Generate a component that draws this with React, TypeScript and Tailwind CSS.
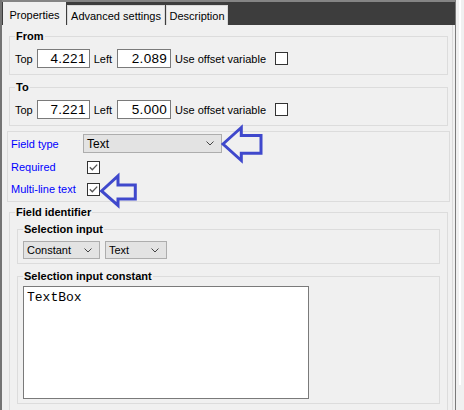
import type { ReactNode } from "react";

const SANS = "font-['Liberation_Sans',Arial,sans-serif]";

export default function App() {
  return (
    <div className={`relative flex h-[410px] w-[464px] overflow-hidden bg-[#f0f0f0] text-[11px] leading-[14px] text-black ${SANS}`}>
      <div className="w-[2px] bg-[#747474]" />
      <div className="flex w-[453px] flex-col">
        <TabBar />
        <div className="flex flex-1">
          <div className="flex-1 pl-[7px] pr-[4px] pt-[4px]">
            <OffsetGroup label="From" top="4.221" left="2.089" />
            <div className="mt-[5px]">
              <OffsetGroup label="To" top="7.221" left="5.000" />
            </div>
            <div className="-mx-[2px] mt-[5px] border border-[#dcdcdc] pb-px pl-[3px] pt-[2px]">
              <div className="flex h-[19px] items-center">
                <span className="w-[72px] text-[#0000ff]">Field type</span>
                <Dropdown width="w-[139px]" height="h-[19px]" text="Text" big />
              </div>
              <div className="mt-[3px] flex h-[22px] items-center">
                <span className="w-[72px] text-[#0000ff]">Required</span>
                <Checkbox checked className="ml-[4px]" />
              </div>
              <div className="flex h-[22px] items-center">
                <span className="w-[72px] text-[#0000ff]">Multi-line text</span>
                <Checkbox checked className="ml-[4px]" />
              </div>
            </div>
            <fieldset className="mt-[3px] border border-[#dcdcdc] px-[5px] pb-[8px]">
              <legend className="px-px font-bold">Field identifier</legend>
              <div className="px-[2px]">
                <fieldset className="mt-[3px] border border-[#dcdcdc] px-[5px] pb-[4px]">
                  <legend className="px-px font-bold">Selection input</legend>
                  <div className="flex gap-[5px] pt-[5px]">
                    <Dropdown width="w-[77px]" height="h-[18px]" text="Constant" />
                    <Dropdown width="w-[62px]" height="h-[18px]" text="Text" />
                  </div>
                </fieldset>
                <fieldset className="mt-[5px] border border-[#dcdcdc] px-[5px] pb-[4px]">
                  <legend className="px-px font-bold">Selection input constant</legend>
                  <div className="pt-[3px]">
                    <div className="h-[113px] w-[286px] border border-[#7a7a7a] bg-white pl-[3px] pt-[3px] font-['Liberation_Mono','Courier_New',monospace] text-[13px] leading-[15px]">
                      TextBox
                    </div>
                  </div>
                </fieldset>
              </div>
            </fieldset>
          </div>
          <div className="w-px bg-[#dadada]" />
          <div className="w-[2px]" />
        </div>
      </div>
      <div className="w-px bg-[#7a7a7a]" />
      <div className="flex w-[8px] pl-[3px]">
        <div className="h-[385px] w-[2px] bg-white" />
      </div>

      <svg className="pointer-events-none absolute left-0 top-0" width="464" height="410" viewBox="0 0 464 410">
        <polygon
          points="223,144 241.3,127.5 241.3,135.5 261,135.5 261,153.3 241.3,153.3 241.3,160.5"
          fill="none"
          stroke="#3f48cc"
          strokeWidth="3"
        />
        <polygon
          points="101.5,191 118,176 118,185 135.3,185 135.3,199 118,199 118,205.5"
          fill="none"
          stroke="#3f48cc"
          strokeWidth="3"
        />
      </svg>
    </div>
  );
}

function TabBar() {
  return (
    <div className="flex h-[25px] items-end gap-px border-t-2 border-[#858585] bg-[#3d3d3d] pl-px">
      <div className="flex h-[23px] w-[63px] items-center justify-center bg-[#f0f0f0] pt-[2px]">Properties</div>
      <Tab width="w-[98px]">Advanced settings</Tab>
      <Tab width="w-[62px]">Description</Tab>
    </div>
  );
}

function Tab({ width, children }: { width: string; children: ReactNode }) {
  return (
    <div className={`flex h-[20px] ${width} items-center justify-center border border-b-0 border-[#d9d9d9] bg-[#f0f0f0] pt-px`}>
      {children}
    </div>
  );
}

function OffsetGroup({ label, top, left }: { label: string; top: string; left: string }) {
  return (
    <fieldset className="border border-[#dcdcdc] px-[5px] pb-[6px]">
      <legend className="px-px font-bold">{label}</legend>
      <div className="flex items-center pt-[6px]">
        <span>Top</span>
        <NumberBox className="ml-[4px] w-[53px]" value={top} />
        <span className="ml-[4px]">Left</span>
        <NumberBox className="ml-[5px] w-[54px]" value={left} />
        <span className="ml-[4px]">Use offset variable</span>
        <Checkbox className="ml-[9px]" />
      </div>
    </fieldset>
  );
}

function NumberBox({ value, className }: { value: string; className: string }) {
  return (
    <div className={`flex h-[19px] items-center justify-end border border-[#7a7a7a] bg-white pr-[3px] text-[13.5px] leading-none tracking-[0.3px] ${className}`}>
      {value}
    </div>
  );
}

function Dropdown({ width, height, text, big }: { width: string; height: string; text: string; big?: boolean }) {
  return (
    <div className={`flex ${height} ${width} items-center justify-between border border-[#adadad] bg-[#e3e3e3] pl-[3px] pr-[7px] ${big ? "text-[12px]" : ""}`}>
      <span>{text}</span>
      <svg width="8" height="5" viewBox="0 0 8 5">
        <path d="M0.5 0.5 L4 4 L7.5 0.5" fill="none" stroke="#444" strokeWidth="1" />
      </svg>
    </div>
  );
}

function Checkbox({ checked, className = "" }: { checked?: boolean; className?: string }) {
  return (
    <div className={`h-[13px] w-[13px] border border-[#333] bg-white ${className}`}>
      {checked && (
        <svg width="11" height="11" viewBox="0 0 11 11">
          <path d="M1.8 5.3 L4.3 7.8 L9.2 2.6" fill="none" stroke="#555" strokeWidth="1.3" />
        </svg>
      )}
    </div>
  );
}
